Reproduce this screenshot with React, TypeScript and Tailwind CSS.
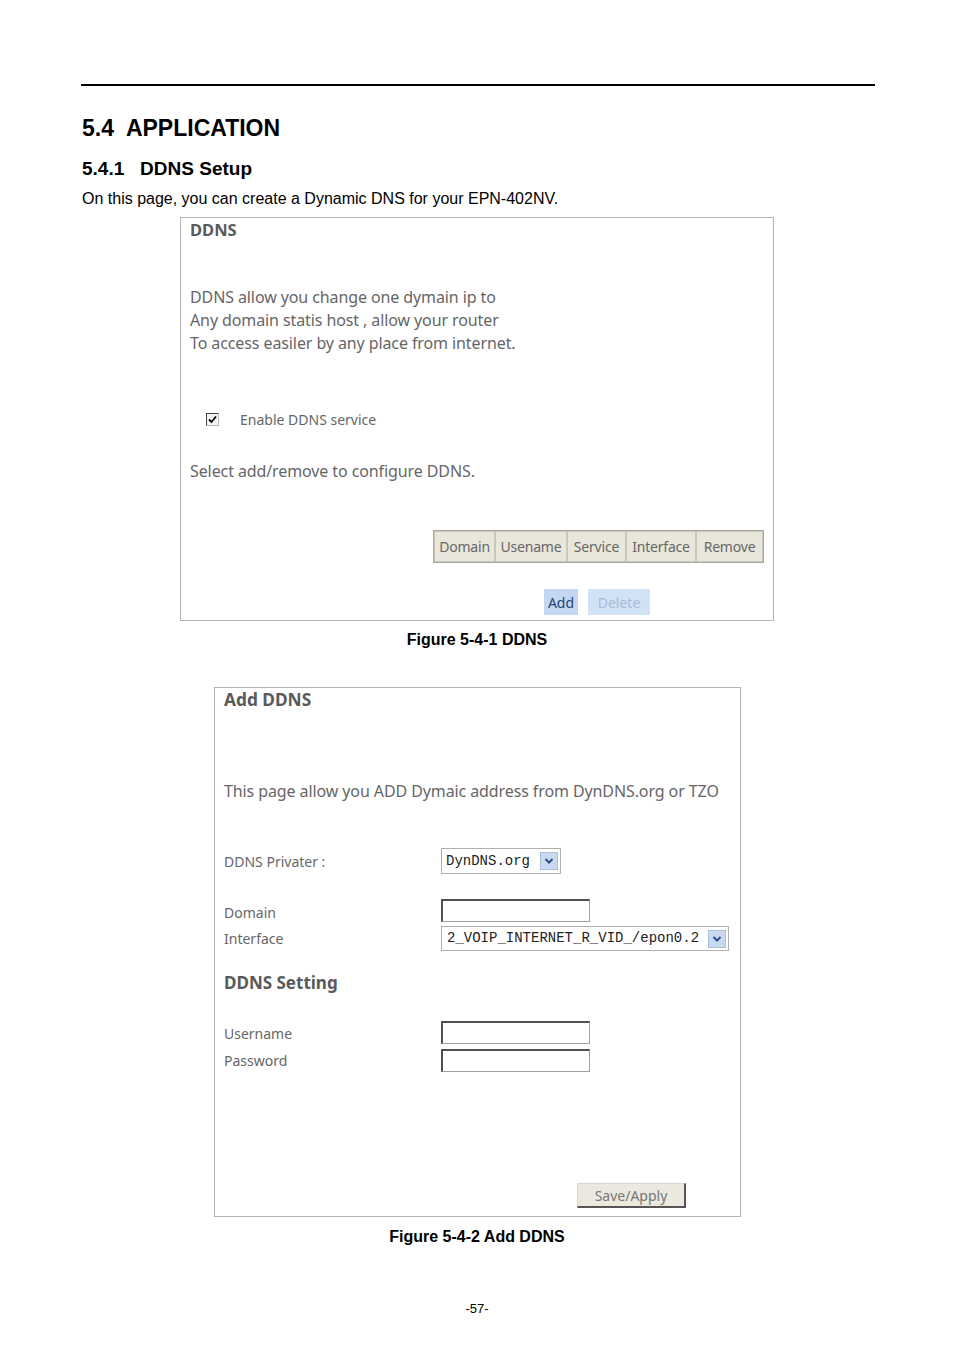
import React from 'react';

const uiFont = { fontFamily: '"Noto Sans", "DejaVu Sans", sans-serif' };
const docFont = { fontFamily: '"Liberation Sans", Arial, sans-serif' };
const monoFont = { fontFamily: '"Liberation Mono", "DejaVu Sans Mono", monospace' };

const Chevron: React.FC = () => (
	<div className="w-[18px] h-[18px] bg-[#c9d9f0] border border-[#a9bfdf] flex items-center justify-center">
		<svg width="10" height="8" viewBox="0 0 10 8">
			<path d="M1.5 2 L5 5.5 L8.5 2" stroke="#2d4f8c" strokeWidth="2" fill="none" />
		</svg>
	</div>
);

const TextBox: React.FC<{ width: string }> = ({ width }) => (
	<div className={`${width} h-[23px] bg-white border border-[#a0a0a0] border-t-[#505050] border-l-[#505050] border-t-2 border-l-2`} />
);

const DdnsFigure: React.FC = () => {
	const cols = [
		{ name: 'Domain', w: 'w-[61px]' },
		{ name: 'Usename', w: 'w-[72px]' },
		{ name: 'Service', w: 'w-[59px]' },
		{ name: 'Interface', w: 'w-[70px]' },
		{ name: 'Remove', w: 'w-[67px]' },
	];
	return (
		<div className="ml-[180px] w-[594px] h-[404px] border border-[#b4b4b4] text-[#666]" style={uiFont}>
			<div className="pl-[9px] pt-[1px] text-[16.5px] leading-[22px] font-bold text-[#5a5a5a]">DDNS</div>
			<div className="pl-[9px] mt-[45px] text-[16px] leading-[23px] tracking-[-0.1px]">
				<div>DDNS allow you change one dymain ip to</div>
				<div>Any domain statis host , allow your router</div>
				<div>To access easiler by any place from internet.</div>
			</div>
			<div className="flex items-center mt-[54px] pl-[25px]">
				<div className="w-[13px] h-[13px] border border-[#bbb] border-t-[#444] border-l-[#444] bg-[#f4f4f4] flex items-center justify-center">
					<svg width="9" height="9" viewBox="0 0 9 9">
						<path d="M1 4.5 L3.5 7 L8 1.5" stroke="#000" strokeWidth="1.8" fill="none" />
					</svg>
				</div>
				<span className="ml-[21px] text-[14px]">Enable DDNS service</span>
			</div>
			<div className="pl-[9px] mt-[30px] text-[16px] leading-[23px] tracking-[-0.1px]">Select add/remove to configure DDNS.</div>
			<div className="flex justify-end pr-[9px] mt-[47px]">
				<div className="flex border border-[#a8a8a0] bg-[#e9e6dc]">
					{cols.map((c) => (
						<div key={c.name} className={`${c.w} h-[31px] border border-[#cac7bd] flex items-center justify-center text-[14px] text-[#666] tracking-[-0.2px]`}>
							{c.name}
						</div>
					))}
				</div>
			</div>
			<div className="flex gap-[10px] mt-[26px] pl-[363px]">
				<div className="w-[34px] h-[26px] bg-[#c3d7f2] flex items-center justify-center text-[14px] text-[#2f4270]">Add</div>
				<div className="w-[62px] h-[26px] bg-[#d1e2f7] flex items-center justify-center text-[14px] text-[#a8bad4]">Delete</div>
			</div>
		</div>
	);
};

const AddDdnsFigure: React.FC = () => (
	<div className="ml-[214px] w-[527px] h-[530px] border border-[#b4b4b4] text-[#666]" style={uiFont}>
		<div className="pl-[9px] pt-[1px] text-[17.3px] leading-[22px] font-bold text-[#5a5a5a]">Add DDNS</div>
		<div className="pl-[9px] mt-[69px] text-[16px] leading-[23px] tracking-[-0.1px]">
			This page allow you ADD Dymaic address from DynDNS.org or TZO
		</div>
		<div className="flex items-center mt-[45px] pl-[9px]">
			<div className="w-[217px] text-[14px]">DDNS Privater :</div>
			<div className="w-[120px] h-[26px] border border-[#b0b0b0] flex items-center justify-between pl-[4px] pr-[2px] bg-white">
				<span className="text-[14px] text-[#222]" style={monoFont}>DynDNS.org</span>
				<Chevron />
			</div>
		</div>
		<div className="flex items-center mt-[24px] pl-[9px]">
			<div className="w-[217px] text-[14px] pt-[4px]">Domain</div>
			<TextBox width="w-[149px]" />
		</div>
		<div className="flex items-center mt-[3px] pl-[9px]">
			<div className="w-[217px] text-[14px]">Interface</div>
			<div className="w-[288px] h-[25px] border border-[#b0b0b0] flex items-center justify-between pl-[5px] pr-[2px] bg-white">
				<span className="text-[14px] text-[#222]" style={monoFont}>2_VOIP_INTERNET_R_VID_/epon0.2</span>
				<Chevron />
			</div>
		</div>
		<div className="pl-[9px] mt-[20px] text-[17px] leading-[24px] font-bold text-[#5a5a5a]">DDNS Setting</div>
		<div className="flex items-center mt-[25px] pl-[9px]">
			<div className="w-[217px] text-[14px] pt-[3px]">Username</div>
			<TextBox width="w-[149px]" />
		</div>
		<div className="flex items-center mt-[5px] pl-[9px]">
			<div className="w-[217px] text-[14px]">Password</div>
			<TextBox width="w-[149px]" />
		</div>
		<div className="flex justify-end pr-[54px] mt-[111px]">
			<div className="w-[109px] h-[25px] bg-[#ebe9df] border border-[#d8d6cc] border-r-2 border-b-2 border-r-[#555] border-b-[#555] flex items-center justify-center text-[14px] text-[#777]">
				Save/Apply
			</div>
		</div>
	</div>
);

const App: React.FC = () => {
	return (
		<div className="w-[954px] min-h-[1350px] bg-white text-black" style={docFont}>
			<div className="pt-[84px] pl-[81px] pr-[79px]">
				<div className="h-[2px] bg-black" />
			</div>
			<div className="px-[82px]">
				<h1 className="mt-[29px] text-[23px] leading-[27px] font-bold">5.4&nbsp; APPLICATION</h1>
				<h2 className="mt-[15px] text-[19px] leading-[23px] font-bold">5.4.1&nbsp;&nbsp; DDNS Setup</h2>
				<p className="mt-[9px] text-[16px] leading-[19px]">On this page, you can create a Dynamic DNS for your EPN-402NV.</p>
			</div>
			<div className="mt-[9px]">
				<DdnsFigure />
			</div>
			<div className="mt-[9px] text-center text-[16px] leading-[19px] font-bold">Figure 5-4-1 DDNS</div>
			<div className="mt-[38px]">
				<AddDdnsFigure />
			</div>
			<div className="mt-[10px] text-center text-[16px] leading-[19px] font-bold">Figure 5-4-2 Add DDNS</div>
			<div className="mt-[55px] text-center text-[13px] leading-[16px]">-57-</div>
		</div>
	);
};

export default App;
